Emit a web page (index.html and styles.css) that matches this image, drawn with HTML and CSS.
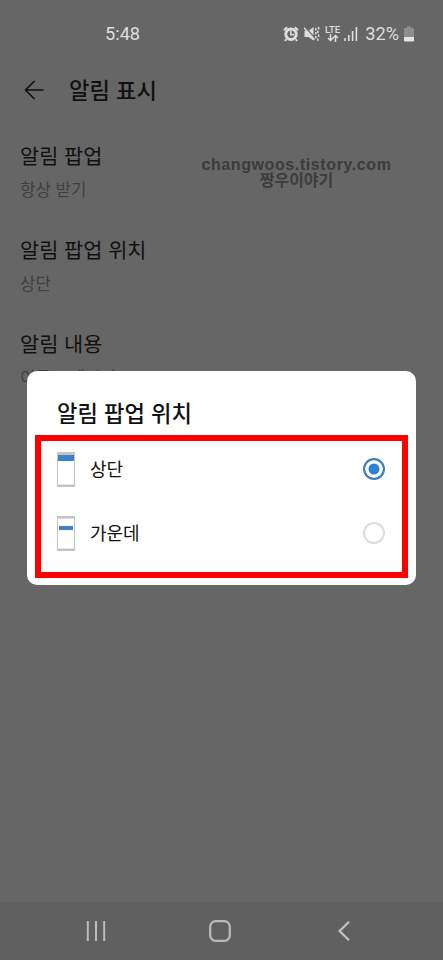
FILE: index.html
```html
<!DOCTYPE html>
<html lang="ko">
<head>
    <meta charset="UTF-8">
    <meta name="viewport" content="width=device-width, initial-scale=1.0">
    <title>알림 표시</title>
    <link rel="stylesheet" href="styles.css">
</head>
<body>
    <div class="screen">
        <div class="status-bar">
            <span class="time">5:48</span>
            <div class="status-icons">
                <svg class="alarm" width="16" height="16" viewBox="0 0 16 16">
                    <path d="M1 4.2L4.2 1.2M15 4.2L11.8 1.2M3.2 13.2L2 15M12.8 13.2L14 15" stroke="#dedede" stroke-width="2" fill="none"/>
                    <circle cx="8" cy="8.3" r="5.2" fill="#666" stroke="#dedede" stroke-width="3"/>
                    <path d="M7.8 4.8V8.7H11" stroke="#dedede" stroke-width="1.6" fill="none"/>
                </svg>
                <svg class="mute" width="16" height="16" viewBox="0 0 16 16">
                    <path d="M0.5 5H4.5L9.5 1V14.5L4.5 11H0.5Z" fill="#dedede"/>
                    <path d="M1 1L10 11" stroke="#666" stroke-width="1.2"/>
                    <path d="M0 1.8L10.5 13.8" stroke="#dedede" stroke-width="1.5"/>
                    <path d="M11.8 2V4.4M11.8 6V8.4M11.8 10V12.4M14.6 1V3.4M13.8 4.8V7.2M14.6 8.6V11M13.8 12.4V14.8" stroke="#dedede" stroke-width="1.5" fill="none"/>
                </svg>
                <div class="network">
                    <span class="lte">LTE</span>
                    <svg width="12" height="8" viewBox="0 0 12 8">
                        <path d="M3.5 0V6.5M1 4L3.5 6.5L6 4M8.5 8V1.5M6 4L8.5 1.5L11 4" stroke="#dedede" stroke-width="1.5" fill="none"/>
                    </svg>
                </div>
                <svg class="signal" width="14" height="15" viewBox="0 0 14 15">
                    <path d="M1 12V15M4.8 9V15M8.6 5V15M12.4 1V15" stroke="#dedede" stroke-width="1.6"/>
                </svg>
                <span class="percent">32%</span>
                <svg class="battery" width="10" height="16" viewBox="0 0 10 16">
                    <path d="M3 0.5H7V2H9Q10 2 10 3V11H0V3Q0 2 1 2H3Z" fill="#8e8e8e"/>
                    <path d="M0 11H10V14.5Q10 15.5 9 15.5H1Q0 15.5 0 14.5Z" fill="#e4e4e4"/>
                </svg>
            </div>
        </div>

        <div class="header">
            <svg width="20" height="20" viewBox="0 0 20 20">
                <path d="M19.5 10H1.5M10.5 1L1.5 10L10.5 19" stroke="#111" stroke-width="1.7" fill="none"/>
            </svg>
            <h1>알림 표시</h1>
        </div>

        <div class="settings">
            <div class="item">
                <div class="item-title">알림 팝업</div>
                <div class="item-value">항상 받기</div>
            </div>
            <div class="item">
                <div class="item-title">알림 팝업 위치</div>
                <div class="item-value">상단</div>
            </div>
            <div class="item">
                <div class="item-title">알림 내용</div>
                <div class="item-value">이름 + 메시지</div>
            </div>
        </div>

        <div class="watermark">
            <div class="site">changwoos.tistory.com</div>
            <div class="site-name">짱우이야기</div>
        </div>

        <div class="dialog">
            <h2>알림 팝업 위치</h2>
            <div class="options">
                <div class="option">
                    <svg width="18" height="35" viewBox="0 0 18 35">
                        <rect x="0.5" y="0.5" width="17" height="34" rx="1" fill="#fff" stroke="#c4c4c4"/>
                        <path d="M0 0H18V3H0ZM0 32.5H18V35H0Z" fill="#c4c4c4"/>
                        <rect x="1" y="3" width="16" height="6" fill="#3b82c8"/>
                    </svg>
                    <span class="label">상단</span>
                    <span class="radio checked"></span>
                </div>
                <div class="option">
                    <svg width="18" height="35" viewBox="0 0 18 35">
                        <rect x="0.5" y="0.5" width="17" height="34" rx="1" fill="#fff" stroke="#c4c4c4"/>
                        <path d="M0 0H18V2.5H0ZM0 32.5H18V35H0Z" fill="#c4c4c4"/>
                        <rect x="2" y="10" width="14" height="4" fill="#3b82c8"/>
                    </svg>
                    <span class="label">가운데</span>
                    <span class="radio"></span>
                </div>
            </div>
        </div>

        <div class="nav-bar">
            <svg width="20" height="20" viewBox="0 0 20 20">
                <path d="M1.8 0V20M10 0V20M18.2 0V20" stroke="#bbb" stroke-width="2"/>
            </svg>
            <svg class="home" width="22" height="22" viewBox="0 0 22 22">
                <rect x="1.2" y="1.2" width="19.6" height="19.6" rx="5.5" stroke="#bbb" stroke-width="2.2" fill="none"/>
            </svg>
            <svg width="12" height="20" viewBox="0 0 12 20">
                <path d="M11 0.8L1.5 10L11 19.2" stroke="#c4c4c4" stroke-width="2.2" fill="none"/>
            </svg>
        </div>
    </div>
</body>
</html>
```

FILE: styles.css
```css
* {
    box-sizing: border-box;
}
body {
    margin: 0;
    font-family: 'Noto Sans CJK KR', sans-serif;
}
.screen {
    position: relative;
    display: flex;
    flex-direction: column;
    width: 443px;
    height: 960px;
    background-color: #666;
    overflow: hidden;
}
svg {
    display: block;
    flex-shrink: 0;
}
.status-bar {
    display: flex;
    justify-content: space-between;
    align-items: center;
    height: 67px;
    padding: 0 29px 0 105px;
    font-family: Roboto, sans-serif;
    font-size: 18.2px;
    color: #dedede;
}
.status-icons {
    display: flex;
    align-items: center;
}
.mute {
    margin-left: 5px;
}
.network {
    display: flex;
    flex-direction: column;
    align-items: center;
    margin-left: 5px;
}
.lte {
    font-size: 9.5px;
    line-height: 8px;
    font-weight: 500;
}
.signal {
    margin-left: 4px;
}
.percent {
    margin-left: 7px;
}
.battery {
    margin-left: 5px;
}
.header {
    display: flex;
    align-items: center;
    height: 46px;
    padding-left: 24px;
    gap: 25px;
}
h1 {
    margin: -2px 0 0;
    font-size: 22.2px;
    font-weight: 500;
    color: #111;
}
.settings {
    flex: 1;
    padding: 26px 20px 0;
}
.item {
    height: 94px;
}
.item-title {
    font-size: 20.8px;
    line-height: 32px;
    color: #111;
}
.item-value {
    font-size: 16.8px;
    line-height: 36px;
    color: #404040;
}
.watermark {
    position: absolute;
    top: 157px;
    left: 201px;
    width: 191px;
    text-align: center;
    color: #3c3c3c;
    font-weight: bold;
    white-space: nowrap;
}
.site {
    font-family: 'Liberation Sans', sans-serif;
    font-size: 16px;
    line-height: 16px;
    letter-spacing: 0.6px;
}
.site-name {
    font-size: 16px;
    line-height: 13px;
}
.dialog {
    position: absolute;
    top: 371px;
    left: 27px;
    width: 389px;
    height: 214px;
    padding: 25px 8px 0;
    background-color: #fff;
    border-radius: 10px;
}
h2 {
    margin: 0 0 7px 22px;
    font-size: 22.2px;
    line-height: 32px;
    font-weight: 500;
    color: #111;
}
.options {
    height: 143px;
    border: 6px solid #f00;
}
.option {
    display: flex;
    align-items: center;
    height: 64px;
    padding: 0 17px 0 16px;
}
.option:first-child {
    margin-top: -4px;
}
.label {
    flex: 1;
    margin-left: 15px;
    font-size: 18px;
    line-height: 26px;
    padding-bottom: 2px;
    color: #111;
}
.radio {
    width: 22px;
    height: 22px;
    border: 2px solid #dcdcdc;
    border-radius: 50%;
}
.radio.checked {
    border-color: #3f80b8;
    background-color: #2f80d8;
    box-shadow: inset 0 0 0 3.5px #fff;
}
.nav-bar {
    display: flex;
    justify-content: space-between;
    align-items: center;
    height: 58px;
    padding: 0 93px 0 86px;
    background-color: #606060;
}
.home {
    margin-right: 4px;
}
```
